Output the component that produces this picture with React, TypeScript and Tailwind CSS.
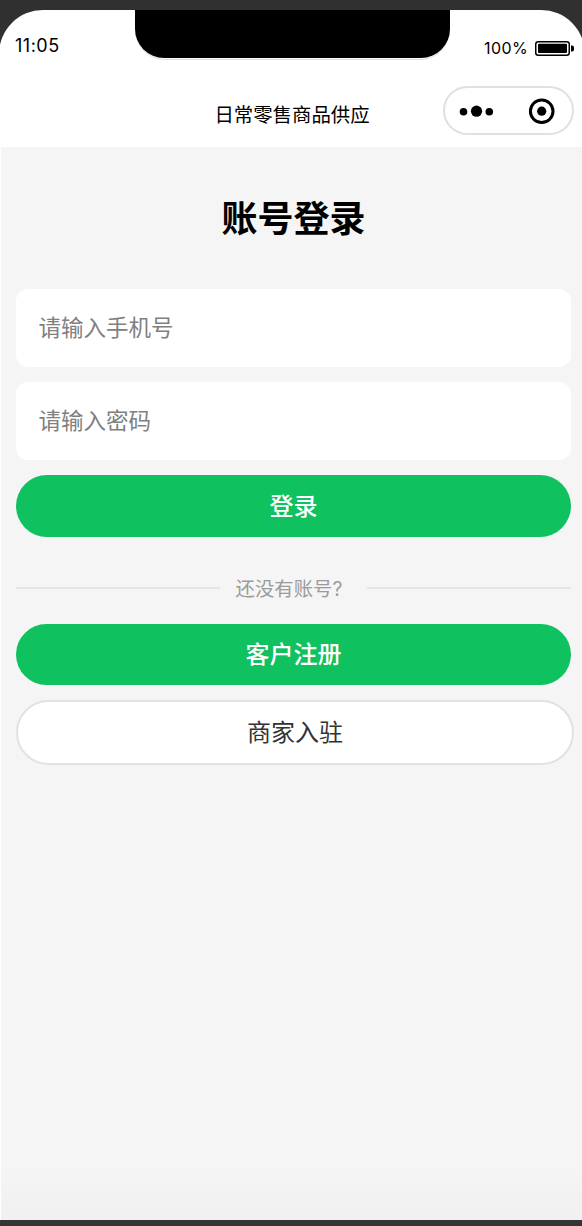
import React from "react";
import clsx from "clsx";

const StatusBar = () => {
  return (
    <div className="relative flex h-[70px] items-start justify-between pl-[16px] pr-[11px]">
      <span className="mt-[24px] text-[18px] leading-[24px] tracking-[0.5px]">11:05</span>
      <div className="absolute left-[135.5px] top-0 h-[50px] w-[315px] rounded-b-[30px] border-b border-[#dedede] bg-white">
        <div className="h-[48px] rounded-b-[29px] bg-black" />
      </div>
      <div className="mt-[27px] flex items-center gap-[7px]">
        <span className="text-[16px] leading-[22px] tracking-[0.4px]">100%</span>
        <svg width="39" height="15" viewBox="0 0 39 15" aria-hidden="true">
          <rect x="0.75" y="0.75" width="33.5" height="13.5" rx="2.5" fill="none" stroke="#000" strokeWidth="1.5" />
          <rect x="3" y="2.7" width="29" height="9.3" rx="1" />
          <path d="M36 4.5h1a2 2 0 0 1 2 2v2a2 2 0 0 1-2 2h-1z" />
        </svg>
      </div>
    </div>
  );
};

const NavBar = () => {
  return (
    <div className="relative flex h-[67px] justify-center pt-[21px]">
      <h1 className="text-[19.4px] leading-[28px]">日常零售商品供应</h1>
      <div className="absolute right-[11px] top-[6px] flex h-[49px] w-[131px] items-center rounded-full border-2 border-[#e0e0e0]">
        <svg width="127" height="45" viewBox="0 0 127 45" aria-hidden="true">
          <circle cx="18.5" cy="23.7" r="3.8" />
          <circle cx="31.5" cy="23.2" r="5.6" />
          <circle cx="44.3" cy="23.7" r="3.8" />
          <circle cx="96.7" cy="23.2" r="11.3" fill="none" stroke="#000" strokeWidth="3" />
          <circle cx="96.7" cy="23.2" r="4.6" />
        </svg>
      </div>
    </div>
  );
};

const Field = ({ type = "text", placeholder }: { type?: string; placeholder: string }) => {
  return (
    <input
      type={type}
      placeholder={placeholder}
      aria-label={placeholder}
      className="mb-[15px] block h-[78px] w-[555px] rounded-[12px] bg-white px-[22.5px] pb-px text-[22.5px] outline-none placeholder:text-[#808080]"
    />
  );
};

const Button = ({ className, children }: { className?: string; children: React.ReactNode }) => {
  return (
    <button
      type="button"
      className={clsx("flex items-center justify-center rounded-full text-[24px]", className)}
    >
      {children}
    </button>
  );
};

const App = () => {
  return (
    <div className="h-[1226px] w-[582px] overflow-hidden bg-[#303030] pt-[10px] font-['Inter','Noto_Sans_CJK_SC',sans-serif] text-black">
      <div className="-ml-px h-[1210px] w-[586px] overflow-hidden rounded-t-[44px] bg-white">
        <StatusBar />
        <NavBar />
        <main className="ml-[2px] h-[1073px] bg-linear-to-b from-[#f5f5f5] from-95% to-[#f0f0f0] pl-[15px]">
          <h2 className="h-[142px] w-[555px] pt-[48px] text-center text-[36px] font-bold leading-[48px]">
            账号登录
          </h2>
          <Field placeholder="请输入手机号" />
          <Field type="password" placeholder="请输入密码" />
          <Button className="h-[61.5px] w-[555px] bg-[#10c160] pt-[2px] font-medium text-white">登录</Button>
          <div className="flex h-[87px] w-[555px] items-center pt-[16px]">
            <span className="h-[2px] w-[204px] bg-[#e5e5e5]" />
            <span className="w-[147px] pr-[9px] pt-[3px] text-center text-[19.4px] text-[#9b9b9b]">还没有账号?</span>
            <span className="h-[2px] w-[204px] bg-[#e5e5e5]" />
          </div>
          <Button className="mb-[15px] h-[61.5px] w-[555px] bg-[#10c160] pt-[2px] font-medium text-white">客户注册</Button>
          <Button className="h-[64.5px] w-[558px] border-2 border-[#e2e2e2] bg-white pt-[2px] text-[#333333]">商家入驻</Button>
        </main>
      </div>
      <div className="h-[6px] bg-[#353535]" />
    </div>
  );
};

export default App;
